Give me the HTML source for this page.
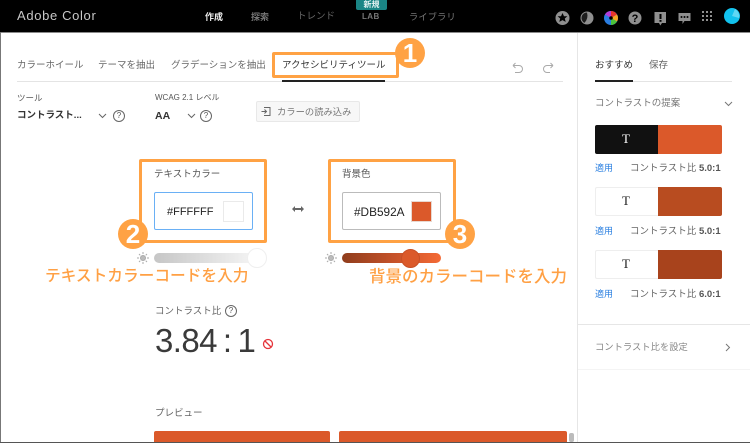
<!DOCTYPE html>
<html lang="ja"><head><meta charset="utf-8"><title>Adobe Color</title>
<style>
html,body{margin:0;padding:0;background:#fff}
#p{position:relative;width:750px;height:443px;overflow:hidden;background:#fff;font-family:"Liberation Sans","Noto Sans CJK JP",sans-serif;color:#555;filter:blur(.3px)}
#p div,#p svg{position:absolute}
.t{white-space:nowrap;line-height:14px;font-size:9.5px}
.o{color:#ffa044;font-weight:500;white-space:nowrap;line-height:20px}
.b{background:#ffa244;border-radius:50%;width:30px;height:30px;color:#fff;font-weight:700;font-size:26px;line-height:30px;text-align:center;font-family:"Liberation Sans",sans-serif}
.ob{border:3.5px solid #ffa244;border-radius:2px;box-sizing:border-box}
.q{width:10px;height:10px;border:1px solid #666;border-radius:50%;font-size:8px;line-height:10px;text-align:center;color:#555}
</style></head><body><div id="p">
<!-- header -->
<div style="left:0;top:0;width:750px;height:32px;background:#000"></div>
<div style="left:0;top:32px;width:750px;height:1px;background:#8a8a8a"></div>
<div style="left:0;top:32px;width:1px;height:411px;background:#777"></div>
<div style="left:0;top:442px;width:750px;height:1px;background:#555"></div>
<div class="t" style="left:17px;top:8px;font-size:13px;line-height:16px;color:#c8c8c8;letter-spacing:.65px">Adobe Color</div>
<div class="t" style="left:205px;top:10px;font-size:9px;color:#eee;font-weight:700">作成</div>
<div class="t" style="left:251px;top:10px;font-size:9px;color:#777;font-weight:700">探索</div>
<div class="t" style="left:297px;top:10px;font-size:9.5px;color:#666">トレンド</div>
<div style="left:356px;top:0;width:31px;height:10px;background:#1a8585;border-radius:0 0 2px 2px;color:#e8f4f4;font-size:8px;line-height:9px;text-align:center;font-weight:700">新規</div>
<div class="t" style="left:362px;top:10px;font-size:8px;color:#777;font-weight:700;letter-spacing:.4px">LAB</div>
<div class="t" style="left:409px;top:10px;font-size:9.2px;color:#777;letter-spacing:.2px">ライブラリ</div>
<!-- header icons -->
<svg style="left:555px;top:0" width="195" height="32" viewBox="0 0 195 32">
<circle cx="7.500" cy="18" r="7" fill="#8f8f8f"/><path d="M7.500 13l1.500 3.200h3.400l-2.600 2.300.9 3.400-3.200-1.800-3.200 1.800.9-3.400-2.600-2.300H6z" fill="#000"/>
<circle cx="32" cy="18" r="6.500" fill="#8f8f8f"/><path d="M32 12.500a5.500 5.500 0 0 0-2.500 10.400A11 11 0 0 0 32 12.500z" fill="#1c1c1c"/>
<circle cx="56" cy="18" r="7" fill="#2a7de1"/><path d="M56 18L56 11A7 7 0 0 1 62 14.500z" fill="#e8352a"/><path d="M56 18L62 14.500A7 7 0 0 1 62 21.500z" fill="#f5a623"/><path d="M56 18L62 21.500A7 7 0 0 1 56 25z" fill="#4cc23a"/><path d="M56 18L50 14.500A7 7 0 0 1 56 11z" fill="#b43bd6"/><circle cx="56" cy="18" r="1.800" fill="#000"/>
<circle cx="80" cy="18" r="6.500" fill="#8f8f8f"/><text x="80" y="21.800" font-size="11" font-weight="700" text-anchor="middle" fill="#000" font-family="Liberation Sans">?</text>
<path d="M99.500 12h11.500v11h-4l-1.700 2.500L104 23h-4.500z" fill="#8f8f8f"/><rect x="104.500" y="14" width="2" height="5" fill="#000"/><rect x="104.500" y="20" width="2" height="1.800" fill="#000"/>
<path d="M123.500 13h12v8h-6l-2 3v-3h-4z" fill="#8f8f8f"/><circle cx="126.500" cy="17" r="1" fill="#000"/><circle cx="129.500" cy="17" r="1" fill="#000"/><circle cx="132.500" cy="17" r="1" fill="#000"/>
<g fill="#8f8f8f"><rect x="147" y="11" width="2" height="2"/><rect x="151" y="11" width="2" height="2"/><rect x="155" y="11" width="2" height="2"/><rect x="147" y="15" width="2" height="2"/><rect x="151" y="15" width="2" height="2"/><rect x="155" y="15" width="2" height="2"/><rect x="147" y="19" width="2" height="2"/><rect x="151" y="19" width="2" height="2"/><rect x="155" y="19" width="2" height="2"/></g>
<circle cx="177" cy="16" r="8" fill="#12c2ee"/><path d="M177 16l3-7a8 8 0 0 1 4 9z" fill="#5fd8f4"/>
</svg>
<!-- tabs -->
<div class="t" style="left:17px;top:59px;color:#666">カラーホイール</div>
<div class="t" style="left:98px;top:59px;color:#666">テーマを抽出</div>
<div class="t" style="left:171px;top:59px;color:#666">グラデーションを抽出</div>
<div class="t" style="left:282px;top:59px;color:#333">アクセシビリティツール</div>
<div style="left:17px;top:81px;width:546px;height:1px;background:#e4e4e4"></div>
<div style="left:282px;top:80px;width:103px;height:1.500px;background:#222"></div>
<div class="ob" style="left:272px;top:52px;width:127px;height:26px;border-width:3px"></div>
<div class="b" style="left:395px;top:38px">1</div>
<svg style="left:510px;top:62px" width="46" height="13" viewBox="0 0 46 13" fill="none" stroke="#aaa" stroke-width="1"><path d="M3 3.500h6a3.500 3.500 0 0 1 0 7H5M3 3.500l2.500-2.500M3 3.500l2.500 2.500"/><path d="M43 3.500h-6a3.500 3.500 0 0 0 0 7h3M43 3.500l-2.500-2.500M43 3.500l-2.500 2.500"/></svg>
<!-- tool row -->
<div class="t" style="left:17px;top:91px;font-size:8.5px;color:#555">ツール</div>
<div class="t" style="left:155px;top:91px;font-size:8px;color:#555">WCAG 2.1 レベル</div>
<div class="t" style="left:17px;top:109px;font-size:9.5px;font-weight:700;color:#333">コントラスト...</div>
<div class="t" style="left:155px;top:109px;font-size:10.5px;font-weight:700;color:#333">AA</div>
<svg style="left:98px;top:113px" width="9" height="6" fill="none" stroke="#666"><path d="M1 1l3.500 3.500L8 1"/></svg>
<div class="q" style="left:113px;top:110px">?</div>
<svg style="left:187px;top:113px" width="9" height="6" fill="none" stroke="#666"><path d="M1 1l3.500 3.500L8 1"/></svg>
<div class="q" style="left:200px;top:110px">?</div>
<div style="left:256px;top:101px;width:104px;height:21px;background:#f7f7f7;border:1px solid #e8e8e8;border-radius:2px;box-sizing:border-box"></div>
<svg style="left:261px;top:107px" width="10" height="10" fill="none" stroke="#666"><path d="M3 .5h6v8H3M.5 4.500h5M3.500 2.500l2 2-2 2"/></svg>
<div class="t" style="left:277px;top:105px;font-size:9.300px;color:#777">カラーの読み込み</div>
<!-- text color -->
<div class="ob" style="left:139px;top:159px;width:128px;height:84px"></div>
<div class="t" style="left:154px;top:168px;color:#555">テキストカラー</div>
<div style="left:154px;top:192px;width:99px;height:38px;border:1px solid #6ab0f5;border-radius:2px;box-sizing:border-box"></div>
<div class="t" style="left:167px;top:205px;font-size:11px;color:#222">#FFFFFF</div>
<div style="left:223px;top:201px;width:21px;height:21px;border:1px solid #eaeaea;box-sizing:border-box;background:#fff"></div>
<div class="b" style="left:118px;top:219px">2</div>
<svg style="left:292px;top:205px" width="12" height="8" fill="#666"><path d="M0 4l3-3v2h6V1l3 3-3 3V5H3v2z"/></svg>
<svg style="left:137px;top:252px" width="12" height="12" stroke="#aaa" stroke-width="1"><circle cx="6" cy="6" r="2.500" fill="#bbb"/><path d="M6 0v2M6 10v2M0 6h2M10 6h2M2 2l1.300 1.300M8.700 8.700L10 10M2 10l1.300-1.300M8.700 3.300L10 2"/></svg>
<div style="left:154px;top:253px;width:104px;height:10px;border-radius:5px;background:linear-gradient(90deg,#c6c6c6,#f6f6f6)"></div>
<div style="left:247px;top:248px;width:20px;height:20px;border-radius:50%;background:#fff;border:1px solid #efefef;box-sizing:border-box"></div>
<div class="o" style="left:45px;top:267px;font-size:15.700px">テキストカラーコードを入力</div>
<!-- bg color -->
<div class="ob" style="left:328px;top:159px;width:128px;height:84px"></div>
<div class="t" style="left:342px;top:168px;color:#555">背景色</div>
<div style="left:342px;top:192px;width:99px;height:38px;border:1px solid #bbb;border-radius:2px;box-sizing:border-box"></div>
<div class="t" style="left:354px;top:205px;font-size:11.800px;color:#222">#DB592A</div>
<div style="left:412px;top:202px;width:19px;height:19px;background:#db592a;outline:1px solid #e8d8d0"></div>
<div class="b" style="left:445px;top:219px">3</div>
<svg style="left:325px;top:252px" width="12" height="12" stroke="#aaa" stroke-width="1"><circle cx="6" cy="6" r="2.500" fill="#bbb"/><path d="M6 0v2M6 10v2M0 6h2M10 6h2M2 2l1.300 1.300M8.700 8.700L10 10M2 10l1.300-1.300M8.700 3.300L10 2"/></svg>
<div style="left:342px;top:253px;width:99px;height:10px;border-radius:5px;background:linear-gradient(90deg,#8f3d1c,#c8532a 55%,#f46a35)"></div>
<div style="left:401px;top:249px;width:19px;height:19px;border-radius:50%;background:#db592a;border:1px solid #c84f25;box-sizing:border-box"></div>
<div class="o" style="left:369px;top:267px;font-size:16.500px">背景のカラーコードを入力</div>
<!-- ratio -->
<div class="t" style="left:155px;top:305px;color:#666">コントラスト比</div>
<div class="q" style="left:225px;top:305px">?</div>
<div class="t" style="left:155px;top:322px;font-size:33px;line-height:38px;color:#3a3a3a;letter-spacing:-.6px;word-spacing:-2.500px">3.84 : 1</div>
<svg style="left:262px;top:338px" width="12" height="12" fill="none" stroke="#e5343a" stroke-width="1.300"><circle cx="6" cy="6" r="4.500"/><path d="M3 3l6 6"/></svg>
<div class="t" style="left:155px;top:407px;color:#666">プレビュー</div>
<div style="left:154px;top:431px;width:176px;height:11px;background:#db592a;border-radius:2px 2px 0 0"></div>
<div style="left:339px;top:431px;width:228px;height:11px;background:#db592a;border-radius:2px 2px 0 0"></div>
<div style="left:569px;top:433px;width:5px;height:9px;background:#bbb;border-radius:2px"></div>
<!-- right panel -->
<div style="left:577px;top:33px;width:1px;height:409px;background:#e6e6e6"></div>
<div class="t" style="left:595px;top:59px;color:#333">おすすめ</div>
<div class="t" style="left:649px;top:59px;color:#666">保存</div>
<div style="left:595px;top:81px;width:137px;height:1px;background:#e4e4e4"></div>
<div style="left:595px;top:80px;width:38px;height:1.500px;background:#222"></div>
<div class="t" style="left:595px;top:97px;color:#777">コントラストの提案</div>
<svg style="left:724px;top:101px" width="9" height="6" fill="none" stroke="#777"><path d="M1 1l3.500 3.500L8 1"/></svg>
<!-- swatch 1 -->
<div style="left:595px;top:125px;width:64px;height:29px;background:#111;border-radius:2px 0 0 2px"></div>
<div style="left:658px;top:125px;width:64px;height:29px;background:#db592a;border-radius:0 2px 2px 0"></div>
<div class="t" style="left:622px;top:132px;font-family:'Liberation Serif',serif;font-size:13px;color:#fff">T</div>
<div class="t" style="left:595px;top:161px;font-size:9px;color:#2a7fe0">適用</div>
<div class="t" style="left:630px;top:162px;font-size:9.500px;color:#666">コントラスト比 <b style="color:#555">5.0:1</b></div>
<!-- swatch 2 -->
<div style="left:595px;top:187px;width:64px;height:29px;background:#fff;border:1px solid #eee;border-right:0;box-sizing:border-box;border-radius:2px 0 0 2px"></div>
<div style="left:658px;top:187px;width:64px;height:29px;background:#b84c20;border-radius:0 2px 2px 0"></div>
<div class="t" style="left:622px;top:194px;font-family:'Liberation Serif',serif;font-size:13px;color:#222">T</div>
<div class="t" style="left:595px;top:224px;font-size:9px;color:#2a7fe0">適用</div>
<div class="t" style="left:630px;top:225px;font-size:9.500px;color:#666">コントラスト比 <b style="color:#555">5.0:1</b></div>
<!-- swatch 3 -->
<div style="left:595px;top:250px;width:64px;height:29px;background:#fff;border:1px solid #eee;border-right:0;box-sizing:border-box;border-radius:2px 0 0 2px"></div>
<div style="left:658px;top:250px;width:64px;height:29px;background:#a8431c;border-radius:0 2px 2px 0"></div>
<div class="t" style="left:622px;top:257px;font-family:'Liberation Serif',serif;font-size:13px;color:#222">T</div>
<div class="t" style="left:595px;top:287px;font-size:9px;color:#2a7fe0">適用</div>
<div class="t" style="left:630px;top:288px;font-size:9.500px;color:#666">コントラスト比 <b style="color:#555">6.0:1</b></div>
<div style="left:578px;top:324px;width:172px;height:1px;background:#e6e6e6"></div>
<div class="t" style="left:595px;top:340px;font-size:9.300px;color:#888">コントラスト比を設定</div>
<svg style="left:725px;top:343px" width="6" height="9" fill="none" stroke="#777"><path d="M1 1l3.500 3.500L1 8"/></svg>
<div style="left:578px;top:369px;width:172px;height:1px;background:#f4f4f4"></div>
</div></body></html>
